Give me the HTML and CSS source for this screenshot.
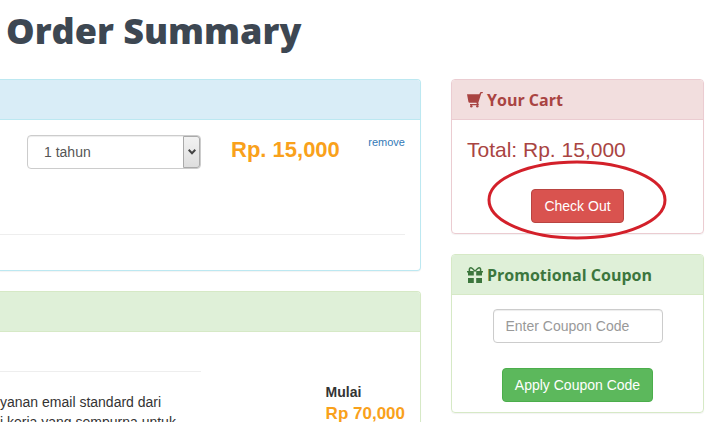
FILE: index.html
```html
<!DOCTYPE html>
<html lang="id">
<head>
    <meta charset="UTF-8">
    <meta name="viewport" content="width=device-width, initial-scale=1.0">
    <title>Order Summary</title>
    <link rel="stylesheet" href="styles.css">
</head>
<body>

    <h1>Order Summary</h1>

    <div class="layout">
        <main class="column">
            <section class="panel panel-info panel-bleed">
                <div class="panel-heading"></div>
                <div class="panel-body order">
                    <div class="order-row">
                        <div class="select-wrap">
                            <select class="form-control" id="period" aria-label="1 tahun">
                                <option>1 tahun</option>
                            </select>
                            <span class="select-arrow">
                                <svg width="8" height="6" viewBox="0 0 8 6"><path d="M0.7 0.8 L4 4.2 L7.3 0.8" fill="none" stroke="#444" stroke-width="2"/></svg>
                            </span>
                        </div>
                        <strong class="price">Rp. 15,000</strong>
                        <a class="remove" href="#">remove</a>
                    </div>
                    <hr>
                </div>
            </section>

            <section class="panel panel-success panel-bleed">
                <div class="panel-heading"></div>
                <div class="panel-body offer">
                    <div class="offer-text">
                        <hr>
                        <p>yanan email standard dari<br>i kerja yang sempurna untuk</p>
                    </div>
                    <div class="offer-price">
                        <strong>Mulai</strong>
                        <strong class="amount">Rp 70,000</strong>
                    </div>
                </div>
            </section>
        </main>

        <aside class="column">
            <section class="panel panel-danger">
                <h2 class="panel-heading">
                    <svg class="icon" width="16" height="16" viewBox="0 0 16 16"><path d="M0 2.2H12.3L13.1 0.5Q13.4 0 14 0H15.2Q16 0 16 0.6Q16 1.2 15.2 1.2H14.3L11.2 11.2L11.8 12.2V13.2H3V12H9.8L9.4 10.8H2.6Q1.6 10.8 1.4 9.8Z" fill="currentColor"/><circle cx="4.3" cy="14.2" r="1.2" fill="currentColor"/><circle cx="10.3" cy="14.2" r="1.2" fill="currentColor"/></svg>
                    Your Cart
                </h2>
                <div class="panel-body cart">
                    <p class="total">Total: Rp. 15,000</p>
                    <div class="checkout">
                        <button class="btn btn-danger" type="button">Check Out</button>
                        <svg class="ring" width="182" height="80" viewBox="0 0 182 80"><ellipse cx="90" cy="40" rx="88" ry="38" fill="none" stroke="#d3202a" stroke-width="3"/></svg>
                    </div>
                </div>
            </section>

            <section class="panel panel-success">
                <h2 class="panel-heading">
                    <svg class="icon" width="16" height="16" viewBox="0 0 16 16"><path d="M1 11H6.8V16H1ZM9.2 11H15V16H9.2ZM0 4H6.8V8.6H1V5.6H0ZM16 4H9.2V8.6H15V5.6H16Z" fill="currentColor"/><path d="M8 4.4C6.4 2.4 5 0.8 3.7 0.8C2.4 0.8 2 2.6 2.6 4.6M8 4.4C9.6 2.4 11 0.8 12.3 0.8C13.6 0.8 14 2.6 13.4 4.6" fill="none" stroke="currentColor" stroke-width="1.5"/></svg>
                    Promotional Coupon
                </h2>
                <form class="panel-body coupon">
                    <input class="form-control" type="text" placeholder="Enter Coupon Code" aria-label="Enter Coupon Code">
                    <button class="btn btn-success" type="button">Apply Coupon Code</button>
                </form>
            </section>
        </aside>
    </div>

</body>
</html>
```

FILE: styles.css
```css
* {
    box-sizing: border-box;
}
body {
    height: 100vh;
    margin: 0;
    padding: 6px 12px 0 0;
    overflow: hidden;
    background: #fff;
    color: #333;
    font-family: "Liberation Sans", Arial, sans-serif;
    font-size: 14px;
    line-height: 20px;
}
h1 {
    margin: 0 0 23px;
    padding-left: 6px;
    color: #3d4752;
    font-family: "Open Sans", sans-serif;
    font-size: 36px;
    font-weight: 800;
    line-height: 50px;
}
p {
    margin: 0;
}
hr {
    width: 100%;
    margin: 0;
    border: 0;
    border-top: 1px solid #eee;
}
.layout {
    display: grid;
    grid-template-columns: 1fr 253px;
    gap: 30px;
    align-items: start;
}
.column {
    display: flex;
    flex-direction: column;
    gap: 20px;
}

/* Panels */
.panel {
    border: 1px solid;
    border-radius: 4px;
    box-shadow: 0 1px 1px rgba(0,0,0,0.05);
}
.panel-bleed {
    border-left: 0;
    border-top-left-radius: 0;
    border-bottom-left-radius: 0;
}
.panel-heading {
    display: flex;
    align-items: center;
    gap: 4px;
    min-height: 40px;
    margin: 0;
    padding: 0 15px;
    border-bottom: 1px solid;
    border-radius: 3px 3px 0 0;
    font-family: "Open Sans", sans-serif;
    font-size: 16px;
    font-weight: 700;
}
.panel-bleed .panel-heading {
    border-top-left-radius: 0;
}
.panel-body {
    padding: 15px;
}
.panel-bleed .panel-body {
    padding-left: 0;
}
.panel-info, .panel-info .panel-heading {
    border-color: #bce8f1;
}
.panel-info .panel-heading {
    background: #d9edf7;
}
.panel-success, .panel-success .panel-heading {
    border-color: #d6e9c6;
}
.panel-success .panel-heading {
    background: #dff0d8;
    color: #3c763d;
}
.panel-danger, .panel-danger .panel-heading {
    border-color: #ebccd1;
}
.panel-danger .panel-heading {
    background: #f2dede;
    color: #a94442;
}

/* Controls */
.form-control {
    width: 100%;
    height: 34px;
    padding: 6px 12px;
    border: 1px solid #ccc;
    border-radius: 4px;
    background: #fff;
    box-shadow: inset 0 1px 1px rgba(0,0,0,0.075);
    color: #555;
    font: inherit;
}
.form-control::placeholder {
    color: #999;
}
.btn {
    height: 34px;
    padding: 0 12px;
    border: 1px solid;
    border-radius: 4px;
    color: #fff;
    font: inherit;
    cursor: pointer;
}
.btn-danger {
    border-color: #b94441;
    background: #d9534f;
}
.btn-success {
    border-color: #4cae4c;
    background: #5cb85c;
}
.select-wrap {
    position: relative;
    width: 174px;
}
.select-wrap select {
    padding-left: 16px;
    appearance: none;
}
.select-arrow {
    position: absolute;
    top: 1px;
    right: 1px;
    bottom: 1px;
    display: flex;
    align-items: center;
    justify-content: center;
    width: 17px;
    border: 1px solid #aaa;
    border-radius: 0 3px 3px 0;
    background: linear-gradient(#f2f2f2, #dedede);
    pointer-events: none;
}

/* Order */
.order {
    padding-bottom: 35px;
}
.order-row {
    display: flex;
    align-items: flex-start;
    min-height: 99px;
    padding-left: 27px;
}
.price {
    margin-left: 30px;
    color: #f9a11b;
    font-size: 22px;
    line-height: 30px;
}
.remove {
    margin-left: auto;
    color: #337ab7;
    font-size: 11px;
    line-height: 14px;
    text-decoration: none;
}
.offer {
    display: flex;
    justify-content: space-between;
    padding-top: 39px;
}
.offer-text {
    display: flex;
    flex-direction: column;
    gap: 20px;
    width: 201px;
}
.offer-text p {
    white-space: nowrap;
}
.offer-price {
    display: flex;
    flex-direction: column;
    padding-top: 11px;
}
.amount {
    color: #f9a11b;
    font-size: 17px;
    line-height: 24px;
}

/* Sidebar */
.cart, .coupon {
    padding-bottom: 10px;
}
.total {
    margin-bottom: 24px;
    color: #a94442;
    font-size: 21px;
    line-height: 30px;
}
.checkout {
    position: relative;
    display: flex;
    justify-content: center;
}
.ring {
    position: absolute;
    bottom: -17px;
    left: 50%;
    transform: translateX(-50%);
    pointer-events: none;
}
.coupon {
    display: flex;
    flex-direction: column;
    align-items: center;
    gap: 25px;
    padding-top: 14px;
}
.coupon .form-control {
    max-width: 170px;
}
```
